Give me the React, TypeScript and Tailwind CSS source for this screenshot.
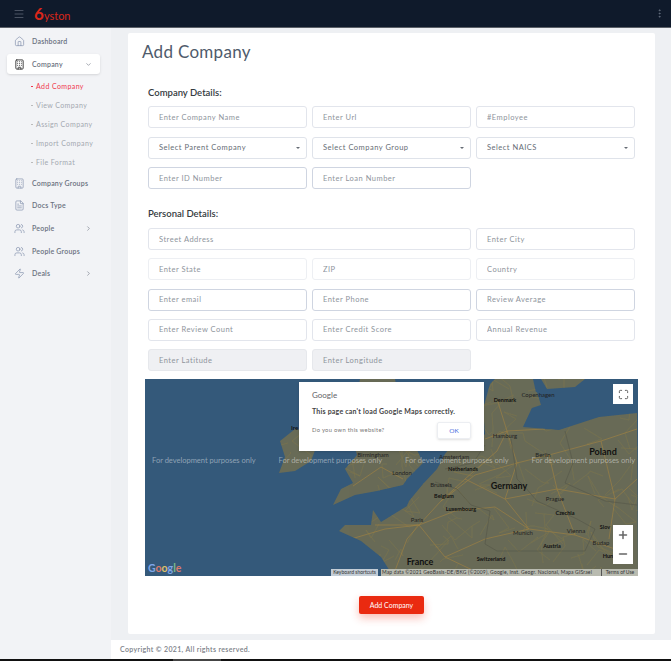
import { Building, ChevronDown, ChevronRight, EllipsisVertical, FileText, Home, Maximize, Menu, Minus, Plus, Users, Zap } from 'lucide-react'

const navTop = [{ label: 'Dashboard', icon: Home }]
const navBottom = [
  { label: 'Company Groups', icon: Building, y: 'mt-[9px]' },
  { label: 'Docs Type', icon: FileText, y: 'mt-[12px]' },
  { label: 'People', icon: Users, y: 'mt-[13px]', more: true },
  { label: 'People Groups', icon: Users, y: 'mt-[13px]' },
  { label: 'Deals', icon: Zap, y: 'mt-[12px]', more: true },
]
const subItems = ['View Company', 'Assign Company', 'Import Company', 'File Format']

// labels on the map
const places = [
  { t: 'Birmingham', x: 228, y: 75, c: 'text-[#222] text-[6px]' },
  { t: 'London', x: 257, y: 93, c: 'text-[#222] text-[6px]' },
  { t: 'Amsterdam', x: 309, y: 77, c: 'text-[#222] text-[6px]' },
  { t: 'Netherlands', x: 318, y: 90, c: 'text-[#111] text-[5.5px] font-bold' },
  { t: 'Brussels', x: 296, y: 105, c: 'text-[#222] text-[6px]' },
  { t: 'Belgium', x: 299, y: 117, c: 'text-[#111] text-[5.5px] font-bold' },
  { t: 'Luxembourg', x: 316, y: 130, c: 'text-[#111] text-[5.5px] font-bold' },
  { t: 'Paris', x: 272, y: 140, c: 'text-[#222] text-[6px]' },
  { t: 'France', x: 275, y: 183, c: 'text-[#111] text-[9px] font-bold' },
  { t: 'Switzerland', x: 346, y: 180, c: 'text-[#111] text-[5.5px] font-bold' },
  { t: 'Germany', x: 364, y: 107, c: 'text-[#111] text-[9px] font-bold' },
  { t: 'Hamburg', x: 360, y: 56, c: 'text-[#222] text-[6px]' },
  { t: 'Denmark', x: 360, y: 21, c: 'text-[#111] text-[5.5px] font-bold' },
  { t: 'Copenhagen', x: 393, y: 15, c: 'text-[#222] text-[6px]' },
  { t: 'Berlin', x: 398, y: 75, c: 'text-[#222] text-[6px]' },
  { t: 'Poland', x: 458, y: 73, c: 'text-[#111] text-[9px] font-bold' },
  { t: 'Prague', x: 410, y: 119, c: 'text-[#222] text-[6px]' },
  { t: 'Czechia', x: 420, y: 134, c: 'text-[#111] text-[5.5px] font-bold' },
  { t: 'Munich', x: 378, y: 153, c: 'text-[#222] text-[6px]' },
  { t: 'Austria', x: 407, y: 167, c: 'text-[#111] text-[5.5px] font-bold' },
  { t: 'Vienna', x: 431, y: 151, c: 'text-[#222] text-[6px]' },
  { t: 'Budap', x: 456, y: 163, c: 'text-[#222] text-[6px]' },
  { t: 'Slov', x: 460, y: 148, c: 'text-[#111] text-[5.5px] font-bold' },
  { t: 'Hun', x: 463, y: 177, c: 'text-[#111] text-[5.5px] font-bold' },
]

const land = [
  'M135 62L150 50L168 52L172 66L166 82L150 92L134 94L140 78Z',
  'M215 0L250 0L256 30L268 62L278 84L262 100L258 106L232 112L210 116L188 126L196 110L208 104L200 90L212 76L204 50Z',
  'M248 197L236 178L216 162L194 152L200 146L226 146L228 131L236 143L262 127L264 122L278 105L292 90L300 75L310 62L335 60L340 55L338 30L345 5L350 0L388 0L392 18L378 48L414 51L454 38L492 34L493 197Z',
  'M370 17L392 13L396 26L378 32Z',
  'M396 0L440 0L430 8L402 10Z',
]

const roads = [
  'M248 197L262 160L274 146L296 122L320 100L352 72L362 52L352 20',
  'M274 146L310 132L350 128L384 150L430 156L470 170',
  'M296 122L330 96L372 84L404 76L456 62L492 50',
  'M404 76L412 110L430 156',
  'M362 52L372 84L360 120L384 150',
  'M230 146L274 146L300 178L340 197',
  'M320 100L360 120L412 110L470 120L492 100',
  'M456 62L470 120L464 160',
  'M208 107L236 88L258 100',
  'M300 178L340 160L384 150',
  'M340 60L362 52L400 50',
  'M206 160L240 150L274 146',
]

const borders = [
  'M290 103L312 110L326 126L345 132L340 165L352 172',
  'M366 60L372 100L380 108L392 122L432 140L450 150L440 172L380 172L352 172',
  'M420 52L428 84L420 104L460 122L492 126',
  'M300 90L328 84L340 66',
]

// thin minor roads, fixed seed so every render gives the same lines
function minorRoads() {
  let seed = 17
  const next = (n: number) => {
    seed = (seed * 1103 + 12345) % 65536
    return (seed / 65536) * n
  }
  const lines: string[] = []
  for (let i = 0; i < 130; i++) {
    let x = 130 + next(363)
    let y = next(197)
    let d = `M${x.toFixed(0)} ${y.toFixed(0)}`
    for (let k = 0; k < 3; k++) {
      x += next(40) - 20
      y += next(40) - 20
      d += `L${x.toFixed(0)} ${y.toFixed(0)}`
    }
    lines.push(d)
  }
  return lines
}

function Field({ placeholder, tone = 'mid', className = '' }: { placeholder: string; tone?: 'light' | 'mid' | 'dark' | 'off'; className?: string }) {
  const border = tone === 'light' ? 'border-[#edeff3]' : tone === 'dark' ? 'border-[#cfd5e1]' : 'border-[#e2e5ec]'
  return (
    <input
      placeholder={placeholder}
      disabled={tone === 'off'}
      className={`h-[22px] w-full min-w-0 rounded-[3px] border px-[10px] text-[7.5px] tracking-[0.5px] outline-none placeholder:text-[#8e949c] ${tone === 'off' ? 'border-[#e6e8ec] bg-[#eff0f3]' : `${border} bg-white`} ${className}`}
    />
  )
}

function SelectBox({ label }: { label: string }) {
  return (
    <div className="flex h-[22px] items-center justify-between rounded-[3px] border border-[#dfe3ea] bg-white pl-[10px] pr-[6px] text-[7.5px] tracking-[0.5px] text-[#666c75]">
      <span>{label}</span>
      <span className="h-0 w-0 border-x-[2px] border-t-[2.5px] border-x-transparent border-t-[#666c75]"></span>
    </div>
  )
}

function MapArea() {
  return (
    <div className="relative mt-[8px] h-[197px] overflow-hidden bg-[#34597a]">
      <svg viewBox="0 0 493 197" className="absolute inset-0 h-full w-full">
        <defs>
          <clipPath id="land">
            {land.map((d) => (
              <path key={d} d={d} />
            ))}
          </clipPath>
        </defs>
        <g fill="#696c58">
          {land.map((d) => (
            <path key={d} d={d} />
          ))}
        </g>
        <g clipPath="url(#land)">
          <g fill="none" stroke="#8c7a45" strokeWidth="0.5" opacity="0.7">
            {minorRoads().map((d, i) => (
              <path key={i} d={d} />
            ))}
          </g>
          <g fill="none" stroke="#a9853f" strokeWidth="0.7" opacity="0.8">
            {roads.map((d) => (
              <path key={d} d={d} />
            ))}
          </g>
          <g fill="none" stroke="#57594b" strokeWidth="0.7">
            {borders.map((d) => (
              <path key={d} d={d} />
            ))}
          </g>
        </g>
      </svg>

      {places.map((p) => (
        <span key={p.t} className={`absolute -translate-x-1/2 -translate-y-1/2 whitespace-nowrap ${p.c}`} style={{ left: p.x, top: p.y }}>
          {p.t}
        </span>
      ))}
      <span className="absolute left-[146px] top-[44px] text-[6px] font-bold text-[#111]">Ire</span>

      {[7, 133.5, 260, 386.5].map((x) => (
        <span key={x} className="absolute top-[76px] whitespace-nowrap text-[7.5px] text-white/45" style={{ left: x }}>
          For development purposes only
        </span>
      ))}

      <div className="absolute left-[154px] top-[3px] h-[69px] w-[185px] bg-white px-[13px] pt-[8px] shadow-sm">
        <p className="text-[8px] leading-[10px] text-[#5f6368]">Google</p>
        <p className="mt-[6px] text-[7px] font-bold leading-[10px] tracking-[0.2px] text-[#444]">This page can't load Google Maps correctly.</p>
        <div className="mt-[6px] flex items-center justify-between">
          <span className="text-[5.8px] tracking-[0.3px] text-[#777]">Do you own this website?</span>
          <span className="flex h-[17px] w-[34px] items-center justify-center rounded-[2px] border border-[#eceef2] text-[6.5px] text-[#4a6fe0] shadow-sm">OK</span>
        </div>
      </div>

      <div className="absolute right-[5px] top-[5px] flex h-[20px] w-[20px] items-center justify-center bg-white">
        <Maximize className="h-[11px] w-[11px] text-[#555]" strokeWidth={2} />
      </div>
      <div className="absolute right-[5px] top-[146px] flex h-[39px] w-[20px] flex-col items-center justify-around bg-white">
        <Plus className="h-[12px] w-[12px] text-[#666]" strokeWidth={3} />
        <Minus className="h-[12px] w-[12px] text-[#666]" strokeWidth={3} />
      </div>

      <span className="absolute bottom-[1px] left-[3px] text-[10.5px] font-bold leading-[13px]">
        <span className="text-[#7fa6e8]">G</span>
        <span className="text-[#d9796c]">o</span>
        <span className="text-[#dcc06a]">o</span>
        <span className="text-[#7fa6e8]">g</span>
        <span className="text-[#7dbb88]">l</span>
        <span className="text-[#d9796c]">e</span>
      </span>
      <div className="absolute bottom-0 right-0 flex h-[7px] items-center text-[5px] leading-[7px] text-[#333]">
        <span className="mr-[3px] w-[47px] whitespace-nowrap bg-[#c3cdd6] text-center">Keyboard shortcuts</span>
        <span className="w-[220px] truncate bg-[#b9bbb0] px-[1px] tracking-[0.15px]">Map data ©2021 GeoBasis-DE/BKG (©2009), Google, Inst. Geogr. Nacional, Mapa GISrael</span>
        <span className="w-[37px] whitespace-nowrap border-l border-[#555] bg-[#b9bbb0] text-center">Terms of Use</span>
      </div>
    </div>
  )
}

export default function App() {
  return (
    <div className="flex h-[661px] w-[671px] flex-col overflow-hidden bg-[#eef0f3] font-['Lato','Noto_Sans',sans-serif]">
      {/* header */}
      <header className="flex h-[28px] shrink-0 items-center justify-between border-b border-[#5b6068] bg-[#0f1a2b] pl-[13px] pr-[6px]">
        <div className="flex items-center gap-[9px]">
          <Menu className="h-[12px] w-[12px] text-[#5d6675]" strokeWidth={1.5} />
          <span className="text-[11px] leading-none text-[#d8261a]">
            <span className="text-[17px] font-bold">6</span>yston
          </span>
        </div>
        <EllipsisVertical className="h-[11px] w-[11px] text-[#667080]" />
      </header>

      <div className="flex min-h-0 flex-1">
        {/* sidebar */}
        <aside className="w-[111px] shrink-0 bg-[#f2f3f6] pl-[7px] pr-[11px] pt-[7px] text-[7px] font-semibold tracking-[0.2px] text-[#6a7180]">
          {navTop.map((item) => (
            <div key={item.label} className="flex h-[12px] items-center gap-[7px] pl-[7px]">
              <item.icon className="h-[11px] w-[11px] text-[#8592ad]" strokeWidth={1.5} />
              <span>{item.label}</span>
            </div>
          ))}
          <div className="mt-[7px] flex h-[20px] items-center rounded-[3px] bg-white pl-[7px] pr-[8px] shadow-sm">
            <Building className="h-[11px] w-[11px] text-[#333]" strokeWidth={2} />
            <span className="ml-[7px] flex-1">Company</span>
            <ChevronDown className="h-[7px] w-[7px]" />
          </div>
          <ul className="mt-[5px] pl-[24px] text-[7px] font-normal tracking-[0.4px]">
            <li className="flex h-[14px] items-center text-[#f0384c]">
              <span className="mr-[3px] h-px w-[2px] bg-[#f0384c]"></span>Add Company
            </li>
            {subItems.map((s) => (
              <li key={s} className="mt-[5px] flex h-[14px] items-center text-[#a3a8b0]">
                <span className="mr-[3px] h-px w-[2px] bg-[#bbb]"></span>
                {s}
              </li>
            ))}
          </ul>
          {navBottom.map((item) => (
            <div key={item.label} className={`flex h-[10px] items-center gap-[7px] pl-[7px] pr-[8px] ${item.y}`}>
              <item.icon className="h-[11px] w-[11px] shrink-0 text-[#8592ad]" strokeWidth={1.5} />
              <span className="flex-1 whitespace-nowrap">{item.label}</span>
              {item.more && <ChevronRight className="h-[7px] w-[7px]" />}
            </div>
          ))}
        </aside>

        {/* content */}
        <div className="flex min-w-0 flex-1 flex-col pt-[5px]">
          <main className="ml-[17px] mr-[16px] rounded-[2px] bg-white px-[17px] pb-[20px] pt-[7px]">
            <h1 className="ml-[-3px] text-[17px] leading-[24px] tracking-[0.3px] text-[#4f5b6b]">Add Company</h1>

            <div className="px-[3px]">
              <h2 className="mt-[22px] text-[9.5px] font-semibold leading-[14px] text-[#343a40]">Company Details:</h2>
              <div className="mt-[6px] grid grid-cols-3 gap-x-[5px] gap-y-[8.5px]">
                <Field placeholder="Enter Company Name" />
                <Field placeholder="Enter Url" />
                <Field placeholder="#Employee" />
                <SelectBox label="Select Parent Company" />
                <SelectBox label="Select Company Group" />
                <SelectBox label="Select NAICS" />
                <Field placeholder="Enter ID Number" tone="dark" />
                <Field placeholder="Enter Loan Number" tone="dark" />
              </div>

              <h2 className="mt-[18px] text-[9.5px] font-semibold leading-[14px] text-[#343a40]">Personal Details:</h2>
              <div className="mt-[7px] grid grid-cols-3 gap-x-[5px] gap-y-[8.25px]">
                <Field placeholder="Street Address" className="col-span-2" />
                <Field placeholder="Enter City" />
                <Field placeholder="Enter State" tone="light" />
                <Field placeholder="ZIP" tone="light" />
                <Field placeholder="Country" tone="light" />
                <Field placeholder="Enter email" tone="dark" />
                <Field placeholder="Enter Phone" tone="dark" />
                <Field placeholder="Review Average" tone="dark" />
                <Field placeholder="Enter Review Count" />
                <Field placeholder="Enter Credit Score" />
                <Field placeholder="Annual Revenue" />
                <Field placeholder="Enter Latitude" tone="off" />
                <Field placeholder="Enter Longitude" tone="off" />
              </div>
            </div>

            <MapArea />

            <div className="mt-[20px] flex justify-center">
              <button className="h-[18px] w-[65px] rounded-[2px] bg-[#ea2a10] text-[7px] text-white shadow-[0_4px_8px_rgba(234,42,16,0.3)]">Add Company</button>
            </div>
          </main>

          <footer className="mt-[6px] flex h-[19px] shrink-0 items-center bg-white pl-[9px] text-[7px] font-semibold tracking-[0.35px] text-[#7b8087]">
            Copyright © 2021, All rights reserved.
          </footer>
        </div>
      </div>

      <div className="flex h-[2px] shrink-0 bg-[#111]">
        <span className="ml-[173px] w-[48px] bg-[#444]"></span>
      </div>
    </div>
  )
}
